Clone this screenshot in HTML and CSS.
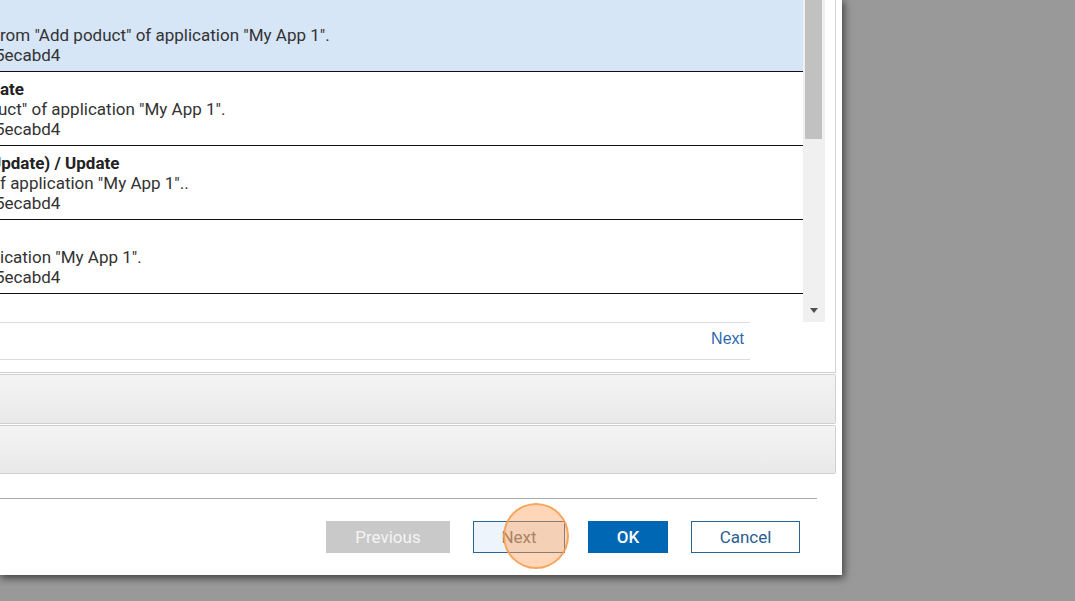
FILE: index.html
```html
<!DOCTYPE html>
<html lang="en">
<head>
<meta charset="utf-8">
<title>Dialog</title>
<link rel="stylesheet" href="styles.css">
</head>
<body>
<div class="dialog">
  <div class="panel">
    <div class="listwrap">
      <div class="list">
        <div class="row selected">
          <div class="title">&nbsp;</div>
          <div class="line">rom "Add poduct" of application "My App 1".</div>
          <div class="line hash">5ecabd4</div>
        </div>
        <div class="row">
          <div class="title">ate</div>
          <div class="line cut-2">uct" of application "My App 1".</div>
          <div class="line hash">5ecabd4</div>
        </div>
        <div class="row">
          <div class="title cut-u">Update) / Update</div>
          <div class="line">f application "My App 1"..</div>
          <div class="line hash">5ecabd4</div>
        </div>
        <div class="row">
          <div class="title">&nbsp;</div>
          <div class="line">ication "My App 1".</div>
          <div class="line hash">5ecabd4</div>
        </div>
      </div>
      <div class="scrollbar">
        <div class="thumb"></div>
        <div class="arrow"></div>
      </div>
    </div>
    <div class="pager">
      <a class="pager-next">Next</a>
    </div>
  </div>
  <div class="accordion"></div>
  <div class="accordion second"></div>
  <div class="footer">
    <div class="buttons">
      <button class="btn btn-prev">Previous</button>
      <button class="btn btn-next">Next</button>
      <button class="btn btn-ok">OK</button>
      <button class="btn btn-cancel">Cancel</button>
      <span class="click-marker"></span>
    </div>
  </div>
</div>
</body>
</html>
```
FILE: styles.css
```css
* { box-sizing: border-box; }
html, body {
  margin: 0;
  padding: 0;
  width: 1075px;
  height: 601px;
  overflow: hidden;
  background: #999999;
  font-family: Roboto, "Liberation Sans", sans-serif;
}
.dialog {
  width: 842px;
  height: 575px;
  background: #ffffff;
  box-shadow: 1px 2px 8px 1px rgba(0, 0, 0, 0.6);
  display: flex;
  flex-direction: column;
}
.panel {
  width: 836px;
  border-right: 1px solid #d2d2d2;
  border-bottom: 1px solid #cfcfcf;
  padding-bottom: 12px;
}
.listwrap {
  display: flex;
  height: 322px;
}
.list {
  width: 803px;
  height: 322px;
  overflow: hidden;
}
.list .row:first-child { margin-top: -2px; }
.row {
  padding: 7px 0 6px 0;
  border-bottom: 1px solid #111;
  color: #333;
  font-size: 17px;
  line-height: 20px;
  white-space: nowrap;
}
.row.selected { background: #d6e6f7; }
.title { font-weight: bold; color: #222; }
.cut-u { text-indent: -10px; }
.cut-2 { text-indent: -2px; }
.hash { text-indent: -5px; }
.scrollbar {
  width: 22px;
  height: 322px;
  background: #f0f0f0;
  position: relative;
}
.thumb {
  margin-left: 2px;
  width: 17px;
  height: 139px;
  background: #c1c1c1;
}
.arrow {
  position: absolute;
  left: 7px;
  top: 308px;
  width: 0;
  height: 0;
  border-left: 4px solid transparent;
  border-right: 4px solid transparent;
  border-top: 5px solid #505050;
}
.pager {
  width: 750px;
  height: 38px;
  border-top: 1px solid #dcdcdc;
  border-bottom: 1px solid #dcdcdc;
  display: flex;
  align-items: center;
  justify-content: flex-end;
  padding: 0 6px 4px 0;
}
.pager-next {
  color: #2c67ad;
  font-size: 16px;
  font-family: "Liberation Sans", sans-serif;
}
.accordion {
  width: 836px;
  height: 50px;
  margin-top: 1px;
  border: 1px solid #d0d0d0;
  border-left: none;
  border-radius: 0 2px 2px 0;
  background: linear-gradient(#f4f4f4, #e9e9e9);
}
.accordion.second { height: 49px; }
.footer {
  margin-top: 24px;
  width: 817px;
  border-top: 1px solid #aaaaaa;
}
.buttons {
  display: flex;
  justify-content: flex-end;
  gap: 23px;
  padding: 22px 17px 0 0;
  position: relative;
}
.btn {
  height: 32px;
  font-family: Roboto, "Liberation Sans", sans-serif;
  font-size: 17px;
  border: 1px solid transparent;
  padding: 0;
  cursor: pointer;
}
.btn-prev { width: 124px; background: #c9c9c9; color: #f4f4f4; }
.btn-next { width: 92px; background: #edf4fb; border-color: #2b6595; color: #6e6e6e; }
.btn-ok { width: 80px; background: #0067b5; color: #ffffff; font-weight: 500; }
.btn-cancel { width: 109px; background: #ffffff; border-color: #2b6595; color: #2a5e8f; }
.click-marker {
  position: absolute;
  left: 503px;
  top: 4px;
  width: 66px;
  height: 66px;
  border-radius: 50%;
  background: rgba(255, 160, 85, 0.42);
  border: 2px solid rgba(245, 160, 85, 0.9);
  pointer-events: none;
}
```
